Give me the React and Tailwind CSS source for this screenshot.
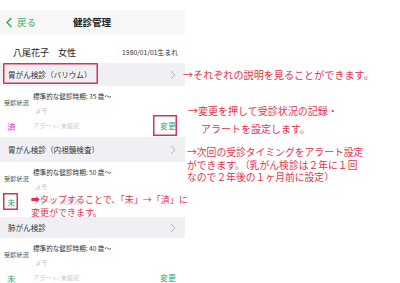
import React from 'react';

const rows = [
  { title: '胃がん検診（バリウム）', age: '35', status: '済', showChange: true, boxTitle: true, boxChange: true, headH: 'h-[23px]', rowH: 'h-[51px]' },
  { title: '胃がん検診（内視鏡検査）', age: '50', status: '未', showChange: false, boxStatus: true, headH: 'h-[25px]', rowH: 'h-[55px]' },
  { title: '肺がん検診', age: '40', status: '未', showChange: true, headH: 'h-[21px]', rowH: 'h-[50px]' },
];

function Chevron() {
  return (
    <svg width="6" height="10" viewBox="0 0 6 10" className="mr-[9px]">
      <path d="M1 1l4 4-4 4" fill="none" stroke="#b8b8bd" strokeWidth="1" />
    </svg>
  );
}

function Section({ item }) {
  return (
    <>
      <div className={`relative ${item.headH} bg-[#f0f0f4] flex items-center justify-between`}>
        <span className="pl-[8px] text-[7.6px] text-[#333]">{item.title}</span>
        <Chevron />
        {item.boxTitle && (
          <div className="absolute left-[3px] top-[0px] w-[95px] h-[21px] rounded-[1px] ring-[1.5px] ring-inset ring-[#d8325a]" />
        )}
      </div>
      <div className={`relative ${item.rowH} bg-white grid grid-cols-[33px_1fr_auto] grid-rows-[14px_14px_16px] pt-[4px]`}>
        <div className="row-span-2 flex items-center pl-[4px] pb-[3px] text-[6.2px] text-[#444]">受診状況</div>
        <div className="flex items-center text-[6.6px] text-[#333]">標準的な健診時期: {item.age} 歳〜</div>
        <div className="row-span-2" />
        <div className="flex items-center pl-[2px] text-[6.2px] text-[#bdbdbd]">メモ</div>
        <div className={`flex items-center pl-[7px] text-[8.5px] ${item.status === '済' ? 'text-[#f22ce0]' : 'text-[#35a878]'}`}>
          {item.status}
        </div>
        <div className="flex items-center text-[6.2px] text-[#c8c8c8]">アラート: 未設定</div>
        <div className="flex items-center pr-[9px] text-[8px] text-[#35a878]">{item.showChange ? '変更' : ''}</div>
        {item.boxChange && (
          <div className="absolute left-[153px] top-[29px] w-[24px] h-[21px] ring-[1.5px] ring-inset ring-[#d8325a]" />
        )}
        {item.boxStatus && (
          <div className="absolute left-[3px] top-[31px] w-[15px] h-[17px] ring-[1.5px] ring-inset ring-[#d8325a]" />
        )}
      </div>
    </>
  );
}

export default function App() {
  return (
    <div className="relative w-[400px] h-[283px] overflow-hidden bg-white" style={{ fontFamily: '"Noto Sans CJK JP", "Noto Sans", sans-serif' }}>
      <div className="w-[185px] pt-[10px]">
        {/* nav bar */}
        <div className="relative h-[25px] bg-[#f7f7f8] flex items-center">
          <svg width="8" height="11" viewBox="0 0 8 11" className="ml-[5px]">
            <path d="M6.5 1L2 5.5 6.5 10" fill="none" stroke="#3fae5a" strokeWidth="1.6" />
          </svg>
          <span className="ml-[4px] text-[9.5px] text-[#3fae5a]">戻る</span>
          <span className="absolute left-[73px] text-[9.5px] font-bold text-[#222]">健診管理</span>
        </div>
        {/* name row */}
        <div className="h-[28px] flex items-center justify-between pt-[7px] pl-[13px] pr-[7px]">
          <span className="text-[9px] text-[#222]">八尾花子　女性</span>
          <span className="text-[6.8px] text-[#333]">1980/01/01生まれ</span>
        </div>
        {rows.map((r, i) => (
          <Section key={i} item={r} />
        ))}
      </div>

      {/* annotations */}
      <div className="absolute left-[183px] top-[68px] text-[10.1px] leading-[14px] text-[#e2344f] whitespace-nowrap">
        →それぞれの説明を見ることができます。
      </div>
      <div className="absolute left-[188px] top-[102px] text-[10px] leading-[18px] text-[#e2344f] whitespace-nowrap">
        <div>→変更を押して受診状況の記録・</div>
        <div className="pl-[13px]">アラートを設定します。</div>
      </div>
      <div className="absolute left-[187px] top-[146px] text-[9.8px] leading-[12.5px] text-[#e2344f] whitespace-nowrap">
        <div>→次回の受診タイミングをアラート設定</div>
        <div>ができます。（乳がん検診は２年に１回</div>
        <div>なので２年後の１ヶ月前に設定）</div>
      </div>
      <div className="absolute left-[31px] top-[193px] text-[9px] leading-[13px] text-[#e2344f] whitespace-nowrap">
        <div>➡タップすることで、「未」→「済」に</div>
        <div>変更ができます。</div>
      </div>
    </div>
  );
}
